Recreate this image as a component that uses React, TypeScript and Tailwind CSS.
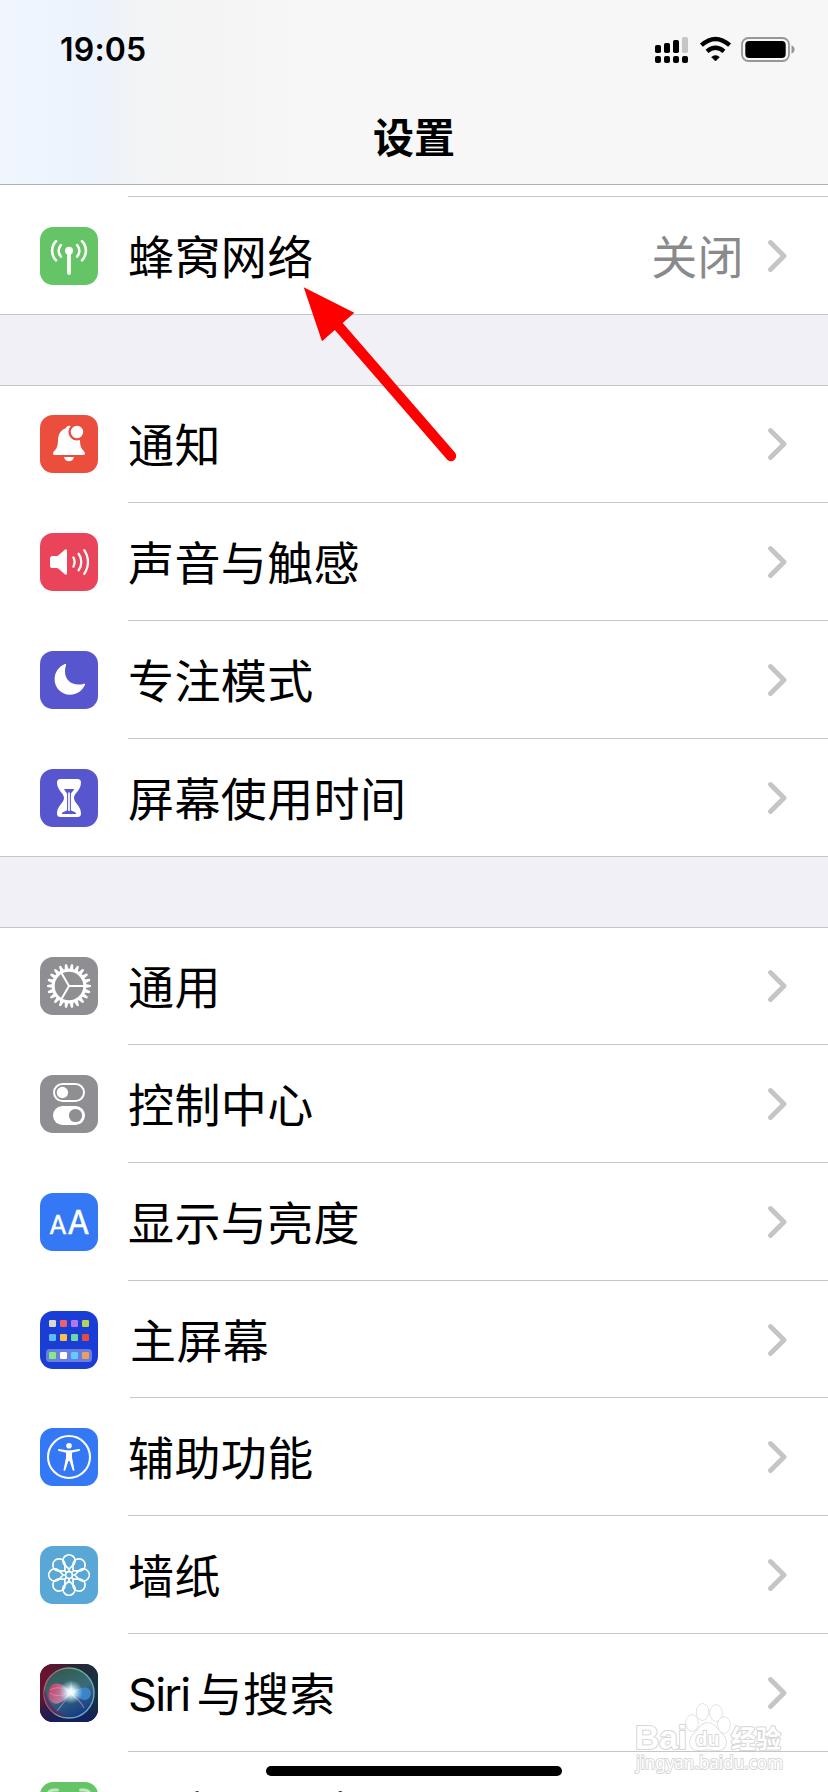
import type { ReactNode } from 'react'

const TEETH = Array.from({ length: 22 }, (_, i) => (i * 360) / 22)
const PETALS = [0, 45, 90, 135, 180, 225, 270, 315]

function Tile({ color, children }: { color: string; children?: ReactNode }) {
  return (
    <svg viewBox="0 0 58 58" className={`block size-[58px] shrink-0 rounded-[13px] ${color}`} fill="none">
      {children}
    </svg>
  )
}

const CellularIcon = () => (
  <Tile color="bg-[#65c466]">
    <circle cx="29" cy="23.8" r="4" fill="#fff" />
    <path d="M29 24V46" stroke="#fff" strokeWidth="3.8" strokeLinecap="round" />
    <g stroke="#fff" strokeWidth="2.6" strokeLinecap="round">
      <path d="M16 14.2C10.8 19.8 10.8 27.8 16 33.4M42 14.2C47.2 19.8 47.2 27.8 42 33.4" />
      <path d="M20.9 18.1C17.9 21.5 17.9 26.1 20.9 29.5M37.1 18.1C40.1 21.5 40.1 26.1 37.1 29.5" />
    </g>
  </Tile>
)

const BellIcon = () => (
  <Tile color="bg-[#eb4e3d]">
    <path
      d="M29 10.8C27.3 10.8 26.5 11.8 25.8 13.2C20.6 15.2 18.2 19 18 25C17.8 30 17.6 31.8 15.6 34.4C13.8 36.3 13 37.3 13 38.4C13 39.5 13.8 40 15 40H43C44.2 40 45 39.5 45 38.4C45 37.3 44.2 36.3 42.4 34.4C40.4 31.8 40.2 30 40 25C39.8 19 37.4 15.2 32.2 13.2C31.5 11.8 30.7 10.8 29 10.8Z"
      fill="#fff"
    />
    <path d="M24 42H34C33.4 44.8 31.6 46.2 29 46.2S24.6 44.8 24 42Z" fill="#fff" />
    <circle cx="37" cy="17" r="7.4" fill="#fff" stroke="#eb4e3d" strokeWidth="2.4" />
  </Tile>
)

const SoundIcon = () => (
  <Tile color="bg-[#ea445a]">
    <path
      d="M10 25.6Q10 23 12.6 23H16.8Q17.6 23 18.2 22.4L24.2 17.2Q27 15.2 27 18V40Q27 42.8 24.2 40.8L18.2 35.6Q17.6 35 16.8 35H12.6Q10 35 10 32.4Z"
      fill="#fff"
    />
    <g stroke="#fff" strokeWidth="2.3" strokeLinecap="round">
      <path d="M33.4 24.4C34.9 27.2 34.9 30.8 33.4 33.6" />
      <path d="M38.6 20.8C42.2 25.6 42.2 32.4 38.6 37.2" />
      <path d="M44.2 17.2C49.2 24.4 49.2 33.6 44.2 40.8" />
    </g>
  </Tile>
)

const MoonIcon = () => (
  <Tile color="bg-[#5856ce]">
    <path
      d="M24.8 13.1C18.6 15.8 14.6 21.6 14.6 28.2C14.6 36.8 21.4 43.7 30 43.7C36.8 43.7 42.6 39.6 45 33.8C45.3 32.8 44.7 32.4 43.6 32.8C42 33.4 40.6 33.6 38.4 33.6C30.4 33.6 25 28.2 25 20.6C25 18 25.4 16.2 26 14.4C26.4 13.2 26 12.6 24.8 13.1Z"
      fill="#fff"
    />
  </Tile>
)

const HourglassIcon = () => (
  <Tile color="bg-[#5856ce]">
    <path
      d="M20.500 10H37.500Q41 10 41 13.500C41 21.500 34 24 34 29C34 34 41 36.500 41 44.500Q41 48 37.500 48H20.500Q17 48 17 44.500C17 36.500 24 34 24 29C24 24 17 21.500 17 13.500Q17 10 20.500 10Z"
      fill="#fff"
    />
    <path
      d="M24 20H34.200C33.200 22.200 31.200 23.400 30.900 25V41C31.600 42.600 36 42.200 36.200 45H21.800C22 42.200 26.400 42.600 27.100 41V25C26.800 23.400 25 22.200 24 20Z"
      fill="#5856ce"
    />
    <path d="M29 23.5V42" stroke="#fff" strokeWidth="1.7" />
  </Tile>
)

const GearIcon = () => (
  <Tile color="bg-[#8e8e93]">
    <circle cx="29" cy="29" r="15.8" stroke="#fff" strokeWidth="3" />
    {TEETH.map((a) => (
      <path key={a} d="M45.500 27L50.600 27.900Q51 28.100 51 29T50.600 30.100L45.500 31Z" fill="#fff" transform={`rotate(${a} 29 29)`} />
    ))}
    <path d="M29 29H45M29 29L21 15.2M29 29L21 42.8" stroke="#fff" strokeWidth="2" />
  </Tile>
)

const TogglesIcon = () => (
  <Tile color="bg-[#8e8e93]">
    <rect x="14" y="9" width="30" height="17" rx="8.5" stroke="#fff" strokeWidth="2" />
    <circle cx="22.4" cy="17.5" r="5.7" fill="#fff" />
    <rect x="13" y="31" width="32" height="19" rx="9.5" fill="#fff" />
    <circle cx="35.5" cy="40.5" r="6.6" fill="#8e8e93" />
  </Tile>
)

const TextSizeIcon = () => (
  <Tile color="bg-[#3478f6]">
    <g fill="#fff" stroke="#fff" strokeWidth="0.5" strokeLinejoin="round" fontFamily="Inter, sans-serif">
      <text x="9.2" y="41" fontSize="25.5" textLength="17.4" lengthAdjust="spacingAndGlyphs">A</text>
      <text x="27.4" y="41" fontSize="32.5" textLength="21.8" lengthAdjust="spacingAndGlyphs">A</text>
    </g>
  </Tile>
)

const APPS = [
  { y: 9, colors: ['#d9d9d0', '#ec5f6b', '#b177f3', '#b9d052'] },
  { y: 23, colors: ['#5bbcf8', '#f6c244', '#70d6a4', '#e64c3c'] },
  { y: 41, colors: ['#86ec80', '#ffffff', '#63cdfa', '#f0a056'] },
]

const HomeScreenIcon = () => (
  <Tile color="bg-[#1a3dd6]">
    <rect x="6" y="38" width="46" height="13" rx="3.5" fill="#667fe0" />
    {APPS.map((row) =>
      row.colors.map((c, i) => <rect key={c} x={9 + i * 11} y={row.y} width="7" height="7" rx="1.3" fill={c} />),
    )}
  </Tile>
)

const AccessibilityIcon = () => (
  <Tile color="bg-[#3478f6]">
    <circle cx="29" cy="29" r="21" stroke="#fff" strokeWidth="2.1" />
    <circle cx="29" cy="17.7" r="2.8" fill="#fff" />
    <path
      d="M19 21.1L26.5 22.3H31.5L39 21.1C40.4 21 40.4 22.6 39.2 22.9L32.5 24.4C32 24.6 32 25 32 25.6V29.6L34.4 41.6C34.6 43.1 33 43.4 32.6 42.1L29.6 33H28.4L25.4 42.1C25 43.4 23.4 43.1 23.6 41.6L26 29.6V25.6C26 25 26 24.6 25.5 24.4L18.8 22.9C17.6 22.6 17.6 21 19 21.1Z"
      fill="#fff"
    />
  </Tile>
)

const WallpaperIcon = () => (
  <Tile color="bg-[#59a7d7]">
    <g stroke="#fff" strokeWidth="1.7">
      <circle cx="29" cy="29" r="3.4" />
      {PETALS.map((a) => (
        <path
          key={a}
          d="M29 25.6V23.200L23.900 18.200A6.100 6.100 0 1 1 34.100 18.200L29 23.200"
          strokeLinejoin="round"
          transform={`rotate(${a} 29 29)`}
        />
      ))}
    </g>
  </Tile>
)

const SiriIcon = () => (
  <Tile color="bg-[#1c1a30]">
    <defs>
      <linearGradient id="siri-bg" x1="0" y1="0.3" x2="1" y2="0.6">
        <stop offset="0" stopColor="#6b1230" />
        <stop offset="0.45" stopColor="#2c2436" />
        <stop offset="1" stopColor="#14343f" />
      </linearGradient>
      <linearGradient id="siri-base" x1="0" y1="0" x2="0" y2="1">
        <stop offset="0.6" stopColor="#101a60" stopOpacity="0" />
        <stop offset="1" stopColor="#141a66" stopOpacity="0.85" />
      </linearGradient>
      <linearGradient id="siri-orb" x1="0.2" y1="0" x2="0.6" y2="1">
        <stop offset="0" stopColor="#2f5a4c" />
        <stop offset="0.5" stopColor="#3d6a78" />
        <stop offset="1" stopColor="#143a86" />
      </linearGradient>
      <linearGradient id="siri-ring" x1="0" y1="0.3" x2="1" y2="0.7">
        <stop offset="0" stopColor="#c0506e" />
        <stop offset="0.5" stopColor="#5bb896" />
        <stop offset="1" stopColor="#6aa5dc" />
      </linearGradient>
      <linearGradient id="siri-pink" x1="0" y1="0" x2="1" y2="0.4">
        <stop offset="0" stopColor="#e0305f" />
        <stop offset="1" stopColor="#d79fc4" />
      </linearGradient>
      <radialGradient id="siri-glow">
        <stop offset="0" stopColor="#fff" />
        <stop offset="0.3" stopColor="#e8fbff" stopOpacity="0.9" />
        <stop offset="1" stopColor="#a0e0f0" stopOpacity="0" />
      </radialGradient>
    </defs>
    <rect width="58" height="58" fill="url(#siri-bg)" />
    <rect width="58" height="58" fill="url(#siri-base)" />
    <circle cx="29" cy="29" r="25" fill="url(#siri-orb)" stroke="url(#siri-ring)" strokeWidth="1.4" />
    <path d="M5 25C8 42 18 50 30 53C15 54 5 44 4 29Z" fill="#6d2058" opacity="0.7" />
    <path d="M9 27C10 17 22 17 31 28C25 38 15 44 10 36C8 33 8 30 9 27Z" fill="url(#siri-pink)" opacity="0.8" />
    <path d="M10 26C16 22 26 24 31 28C24 32 15 33 10 29" stroke="#f19ab9" strokeWidth="0.8" opacity="0.7" />
    <path d="M31 29C38 26 43 21 49 25C53 29 50 36 45 36C40 36 36 31 31 29Z" fill="#3f8ed8" opacity="0.8" />
    <path d="M31 28C25 38 20 43 17 47M31 29C37 34 41 38 44 44" stroke="#b6a4d8" strokeWidth="1.2" opacity="0.6" />
    <circle cx="31" cy="28" r="12" fill="url(#siri-glow)" />
    <path d="M31 17L32 27L40 24.500L32.500 29L37 36L31 30.500L24 35L29.400 28.500L22 22.500L30 27Z" fill="#fff" opacity="0.45" />
  </Tile>
)

const FaceIdIcon = () => (
  <Tile color="bg-[#65c466]">
    <g stroke="#c1e7c2" strokeWidth="3" strokeLinecap="round">
      <path d="M8 17V14Q8 8 14 8H17.5M40.5 8H44Q50 8 50 14V17" />
      <path d="M8 41V44Q8 50 14 50H17.5M40.5 50H44Q50 50 50 44V41" />
    </g>
  </Tile>
)

const Chevron = () => (
  <svg viewBox="0 0 20 34" className="block h-[34px] w-5 shrink-0" fill="none">
    <path d="M3.5 3.5L17 17L3.5 30.5" stroke="#c5c5c7" strokeWidth="4.8" strokeLinecap="round" strokeLinejoin="round" />
  </svg>
)

type RowProps = {
  icon: ReactNode
  label: ReactNode
  value?: string
  size?: string
  inset?: string
  line?: string
  last?: boolean
}

function Row({
  icon,
  label,
  value,
  size = 'h-[118px] pt-[30px]',
  inset = 'ml-[30px]',
  line = 'top-[87px]',
  last,
}: RowProps) {
  return (
    <div className={`flex pl-10 ${size} ${last ? 'border-b border-[#c6c6c8]' : ''}`}>
      {icon}
      <div className={`relative flex h-[58px] grow items-center justify-between pr-[41px] ${inset}`}>
        <span className="mt-0.5 whitespace-pre text-[46px] leading-[58px] tracking-[0.4px]">{label}</span>
        <span className="flex items-center gap-[23px]">
          {value && <span className="mt-0.5 text-[46px] leading-[58px] tracking-[0.4px] text-[#8a8a8d]">{value}</span>}
          <Chevron />
        </span>
        {!last && <span className={`absolute inset-x-0 h-px bg-[#c6c6c8] ${line}`} />}
      </div>
    </div>
  )
}

const Gap = () => <div className="h-[71px] border-b border-[#c6c6c8] bg-[#f1f0f6]" />

function StatusBar() {
  return (
    <div className="flex h-[100px] justify-between pl-[60px] pr-[33px]">
      <span className="pt-[30px] font-[Inter,sans-serif] text-[32px] font-semibold leading-[40px] tracking-[0.2px]">19:05</span>
      <svg viewBox="0 0 140 28" className="mt-[36px] block h-7 w-[140px]" fill="none">
        <g fill="#000">
          <rect x="0" y="9" width="6" height="8" rx="1.8" />
          <rect x="9" y="7" width="6" height="10" rx="1.8" />
          <rect x="18" y="4" width="6" height="13" rx="1.8" />
          <rect x="27" y="1" width="6" height="16" rx="1.8" fill="#c6c6c6" />
          <rect x="0" y="20" width="6" height="7" rx="2" />
          <rect x="9" y="20" width="6" height="7" rx="2" />
          <rect x="18" y="20" width="6" height="7" rx="2" />
          <rect x="27" y="20" width="6" height="7" rx="2" />
          <path d="M60.5 25L56.6 21.1Q60.5 18 64.4 21.1Z" stroke="#000" strokeWidth="0.6" strokeLinejoin="round" />
        </g>
        <g stroke="#000" strokeWidth="4.3">
          <path d="M46.4 9.2Q60.5-3.4 74.6 9.2" />
          <path d="M52 15.4Q60.5 8.2 69 15.4" />
        </g>
        <rect x="87" y="2" width="47" height="23" rx="6.5" stroke="#979797" strokeWidth="1.8" />
        <rect x="90.3" y="5" width="40.4" height="17" rx="4" fill="#000" />
        <path d="M136.5 9.2C140.6 10.8 140.6 16.2 136.5 17.8Z" fill="#979797" />
      </svg>
    </div>
  )
}

function Watermark() {
  return (
    <svg
      viewBox="0 0 160 80"
      className="absolute left-[631px] top-[1698px] h-20 w-40 [paint-order:stroke_fill]"
      fill="#fff"
      stroke="#d6d6d6"
      strokeWidth="2"
      strokeLinejoin="round"
    >
      <g fontFamily="'Liberation Sans', sans-serif" fontWeight="700">
        <text x="4" y="51" fontSize="33" textLength="52" lengthAdjust="spacingAndGlyphs">Bai</text>
        <g strokeWidth="1.3">
          <ellipse cx="61" cy="25" rx="6" ry="8" />
          <ellipse cx="71.5" cy="14" rx="6" ry="8" />
          <ellipse cx="85" cy="15" rx="6" ry="8" />
          <ellipse cx="93" cy="27" rx="6" ry="8" />
          <path d="M76.500 25C70 25 67 32 62 37C57 42 58 52 66 52C71 52 73 51.500 77 51.500C81 51.500 83 52 88 52C96 52 97 42 92 37C87 32 84 25 76.500 25Z" />
        </g>
        <text x="64.500" y="48" fontSize="21" textLength="24" lengthAdjust="spacingAndGlyphs">du</text>
      </g>
      <text x="100" y="50" fontSize="25" fontWeight="700" textLength="50" fontFamily="'Noto Sans CJK SC', sans-serif">经验</text>
      <text x="5" y="71" fontSize="18.500" textLength="147" lengthAdjust="spacingAndGlyphs" fontFamily="'Noto Sans', sans-serif">jingyan.baidu.com</text>
    </svg>
  )
}

export default function App() {
  return (
    <div className="relative h-[1792px] w-[828px] overflow-hidden bg-white font-[Inter,'Noto_Sans_CJK_SC',sans-serif] text-black">
      <header className="h-[185px] border-b border-[#b1b1b3] bg-[linear-gradient(90deg,#f0f6fc_0px,#edf5fe_35px,#ecf3fd_85px,#eff3f8_115px,#f3f4f5_150px,#f4f4f4_210px,#f7f7f7_300px)]">
        <StatusBar />
        <h1 className="text-center text-[41px] font-semibold leading-[76px]">设置</h1>
      </header>
      <main>
        <div className="ml-32 h-3 border-b border-[#c6c6c8]" />
        <Row icon={<CellularIcon />} label="蜂窝网络" value="关闭" last />
        <Gap />
        <Row icon={<BellIcon />} label="通知" size="h-[117px] pt-[29px]" line="top-[87px]" />
        <Row icon={<SoundIcon />} label="声音与触感" />
        <Row icon={<MoonIcon />} label="专注模式" />
        <Row icon={<HourglassIcon />} label="屏幕使用时间" last />
        <Gap />
        <Row icon={<GearIcon />} label="通用" size="h-[117px] pt-[29px]" />
        <Row icon={<TogglesIcon />} label="控制中心" />
        <Row icon={<TextSizeIcon />} label="显示与亮度" />
        <Row icon={<HomeScreenIcon />} label="主屏幕" size="h-[117px] pt-[30px]" inset="ml-[32px]" line="top-[86px]" />
        <Row icon={<AccessibilityIcon />} label="辅助功能" />
        <Row icon={<WallpaperIcon />} label="墙纸" />
        <Row icon={<SiriIcon />} label={<><span className="mr-[7px] text-[45px] tracking-[-1.7px]">Siri</span>与搜索</>} />
        <Row
          icon={<FaceIdIcon />}
          label={<span className="block pt-0.5">面容<span className="mx-[5px] text-[45px] tracking-[-2px]">ID</span>与密码</span>}
        />
      </main>
      <svg viewBox="0 0 160 180" className="absolute left-[300px] top-[284px] h-[180px] w-40" fill="none">
        <path d="M3.700 3.300L54.300 28.700L22 57.300Z" fill="#f00" />
        <path d="M34 37L151 172" stroke="#f00" strokeWidth="10.400" strokeLinecap="round" />
      </svg>
      <Watermark />
      <div className="absolute left-[266px] top-[1766px] h-2.5 w-[296px] rounded-full bg-black" />
    </div>
  )
}
